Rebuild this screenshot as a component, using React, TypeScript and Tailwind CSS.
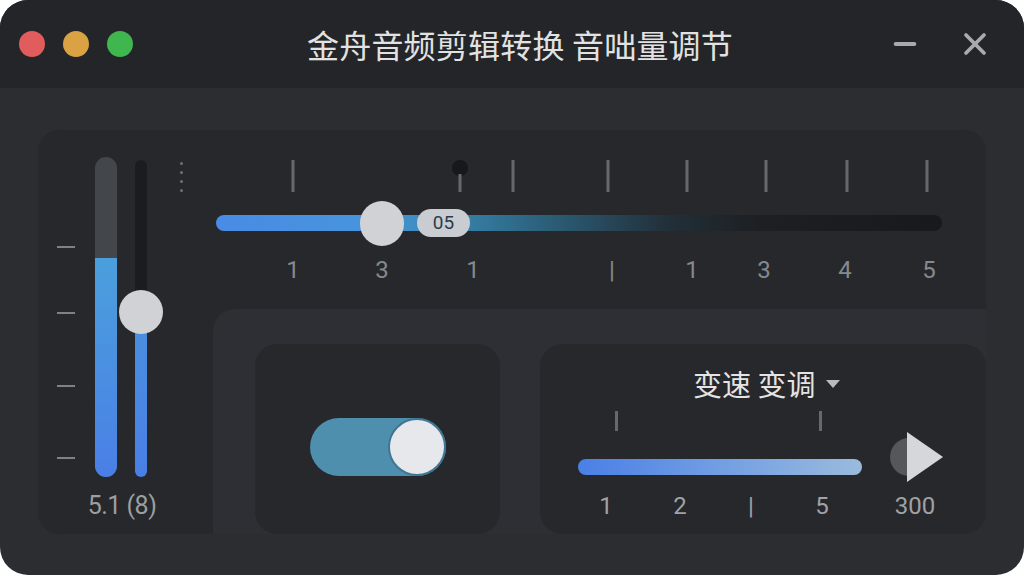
import { X, Minus } from "lucide-react";

const TOP_TICKS = [80, 300, 395, 474, 553, 634, 714];
const TOP_LABELS: [number, string][] = [
  [80, "1"],
  [169, "3"],
  [260, "1"],
  [399, "|"],
  [479, "1"],
  [551, "3"],
  [632, "4"],
  [716, "5"],
];
const SPEED_LABELS: [number, string][] = [
  [28, "1"],
  [102, "2"],
  [173, "|"],
  [244, "5"],
  [337, "300"],
];

function TitleBar() {
  return (
    <div className="relative flex h-[88px] items-center bg-[#232529] px-[19px]">
      <div className="flex gap-[18px]">
        <span className="h-[26px] w-[26px] rounded-full bg-[#e15c5c]" />
        <span className="h-[26px] w-[26px] rounded-full bg-[#dba243]" />
        <span className="h-[26px] w-[26px] rounded-full bg-[#3fb74e]" />
      </div>
      <div className="flex-1 pl-[18px] text-center text-[32px] tracking-[0.2px] text-[#e2e2e2] [font-family:'Noto_Sans_CJK_SC',sans-serif]">
        金舟音频剪辑转换 音咄量调节
      </div>
      <div className="flex items-center gap-[36px] pr-[12px] text-[#a8aaae]">
        <Minus size={32} strokeWidth={3} />
        <X size={36} strokeWidth={2.5} />
      </div>
    </div>
  );
}

function LeftMeter() {
  return (
    <div className="flex w-[175px] shrink-0 flex-col bg-[#26282c]">
      <div className="flex pl-[19px] pt-[27px]">
        {/* scale ticks */}
        <div className="flex w-[18px] flex-col">
          <span className="mt-[89px] h-[2px] w-[18px] bg-[#7f8185]" />
          <span className="mt-[64px] h-[2px] w-[18px] bg-[#7f8185]" />
          <span className="mt-[71px] h-[2px] w-[18px] bg-[#7f8185]" />
          <span className="mt-[70px] h-[2px] w-[18px] bg-[#7f8185]" />
        </div>
        {/* level bar */}
        <div className="ml-[20px] flex h-[320px] w-[22px] flex-col overflow-hidden rounded-full bg-[#43464b]">
          <div className="h-[101px]" />
          <div className="flex-1 bg-gradient-to-b from-[#4b9fdc] to-[#4a7fe6]" />
        </div>
        {/* fader */}
        <div className="relative ml-[18px] mt-[3px] flex h-[317px] w-[12px] flex-col overflow-hidden rounded-full bg-[#1b1c1f]">
          <div className="h-[152px]" />
          <div className="flex-1 bg-gradient-to-b from-[#4a90de] to-[#4a7fe6]" />
        </div>
        <div className="relative w-0">
          <span className="absolute left-[-28px] top-[133px] h-[44px] w-[44px] rounded-full bg-[#d1d2d5]" />
        </div>
        <div className="ml-[33px] mt-[5px] flex flex-col gap-[6px]">
          <span className="h-[3px] w-[3px] rounded-full bg-[#6d6f73]" />
          <span className="h-[3px] w-[3px] rounded-full bg-[#6d6f73]" />
          <span className="h-[3px] w-[3px] rounded-full bg-[#6d6f73]" />
          <span className="h-[3px] w-[3px] rounded-full bg-[#6d6f73]" />
        </div>
      </div>
      <div className="mt-[10px] w-[168px] text-center text-[25px] tracking-[-0.5px] text-[#9c9ea2] [font-family:Roboto,sans-serif]">
        5.1 (8)
      </div>
    </div>
  );
}

function TopSlider() {
  return (
    <div className="relative h-[180px] bg-[#26282c]">
      {TOP_TICKS.map((x) => (
        <span
          key={x}
          className="absolute top-[30px] h-[32px] w-[3px] -translate-x-1/2 bg-[#66686c]"
          style={{ left: x }}
        />
      ))}
      <span className="absolute left-[247px] top-[30px] h-[16px] w-[16px] -translate-x-1/2 rounded-full bg-[#17181a]" />
      <span className="absolute left-[247px] top-[44px] h-[18px] w-[3px] -translate-x-1/2 bg-[#66686c]" />

      <div className="absolute left-[3px] top-[85px] h-[16px] w-[726px] rounded-full bg-[linear-gradient(90deg,#4a8be6_0%,#4794dc_22%,#3c8ab8_30%,#2f6f8e_40%,#22303a_62%,#1d1f22_75%,#18191c_100%)]" />
      <span className="absolute left-[147px] top-[71px] h-[45px] w-[44px] rounded-full bg-[#d1d2d5]" />
      <span className="absolute left-[204px] top-[79px] flex h-[28px] w-[53px] items-center justify-center rounded-full bg-[#c9cdd2] text-[19px] text-[#2c3b4b] [font-family:Roboto,sans-serif]">
        05
      </span>

      {TOP_LABELS.map(([x, t], i) => (
        <span
          key={i}
          className="absolute top-[122px] -translate-x-1/2 text-[24px] text-[#86888c] [font-family:Roboto,sans-serif]"
          style={{ left: x }}
        >
          {t}
        </span>
      ))}
    </div>
  );
}

function ToggleCard() {
  return (
    <div className="flex h-[190px] w-[245px] items-center justify-center rounded-[22px] bg-[#26282c] pt-[16px]">
      <div className="flex h-[58px] w-[136px] items-center justify-end rounded-full bg-[#4f8fae]">
        <span className="h-[58px] w-[58px] rounded-full border-2 border-[#3e7693] bg-[#e6e8ec]" />
      </div>
    </div>
  );
}

function SpeedCard() {
  return (
    <div className="flex h-[190px] flex-1 flex-col rounded-[22px] bg-[#26282c] pl-[38px]">
      <div className="mt-[20px] flex items-center pl-[115px] text-[29px] leading-[38px] text-[#e4e4e4] [font-family:'Noto_Sans_CJK_SC',sans-serif]">
        变速 变调
        <span className="ml-[10px] mt-[2px] h-0 w-0 border-x-[7px] border-t-[8px] border-x-transparent border-t-[#b9bbbe]" />
      </div>
      <div className="relative mt-[9px] flex h-[20px]">
        <span className="absolute left-[37px] h-[20px] w-[3px] bg-[#66686c]" />
        <span className="absolute left-[241px] h-[20px] w-[3px] bg-[#66686c]" />
      </div>
      <div className="mt-[1px] flex items-center gap-[28px]">
        <div className="mt-[20px] h-[16px] w-[284px] rounded-full bg-gradient-to-r from-[#4a7fe6] to-[#9bbbdd]" />
        <svg width="53" height="50" viewBox="0 0 53 50">
          <path d="M19 6 A19 19 0 0 0 19 44 Z" fill="#55575b" />
          <path d="M17 0 L53 25 L17 50 Z" fill="#d6d7da" />
        </svg>
      </div>
      <div className="relative mt-[6px] h-[30px]">
        {SPEED_LABELS.map(([x, t], i) => (
          <span
            key={i}
            className="absolute -translate-x-1/2 text-[24px] text-[#a0a2a6] [font-family:Roboto,sans-serif]"
            style={{ left: x }}
          >
            {t}
          </span>
        ))}
      </div>
    </div>
  );
}

export default function App() {
  return (
    <div className="h-[576px] w-[1024px] bg-white">
      <div className="flex h-[575px] w-[1024px] flex-col overflow-hidden rounded-[28px] bg-[#2b2d31]">
        <TitleBar />
        <div className="flex-1 px-[38px] pt-[42px]">
          <div className="flex h-[404px] overflow-hidden rounded-[22px] bg-[#26282c]">
            <LeftMeter />
            <div className="flex flex-1 flex-col">
              <TopSlider />
              <div className="flex flex-1 gap-[40px] rounded-tl-[22px] bg-[#2d2f34] pl-[42px] pt-[35px]">
                <ToggleCard />
                <SpeedCard />
              </div>
            </div>
          </div>
        </div>
      </div>
    </div>
  );
}
